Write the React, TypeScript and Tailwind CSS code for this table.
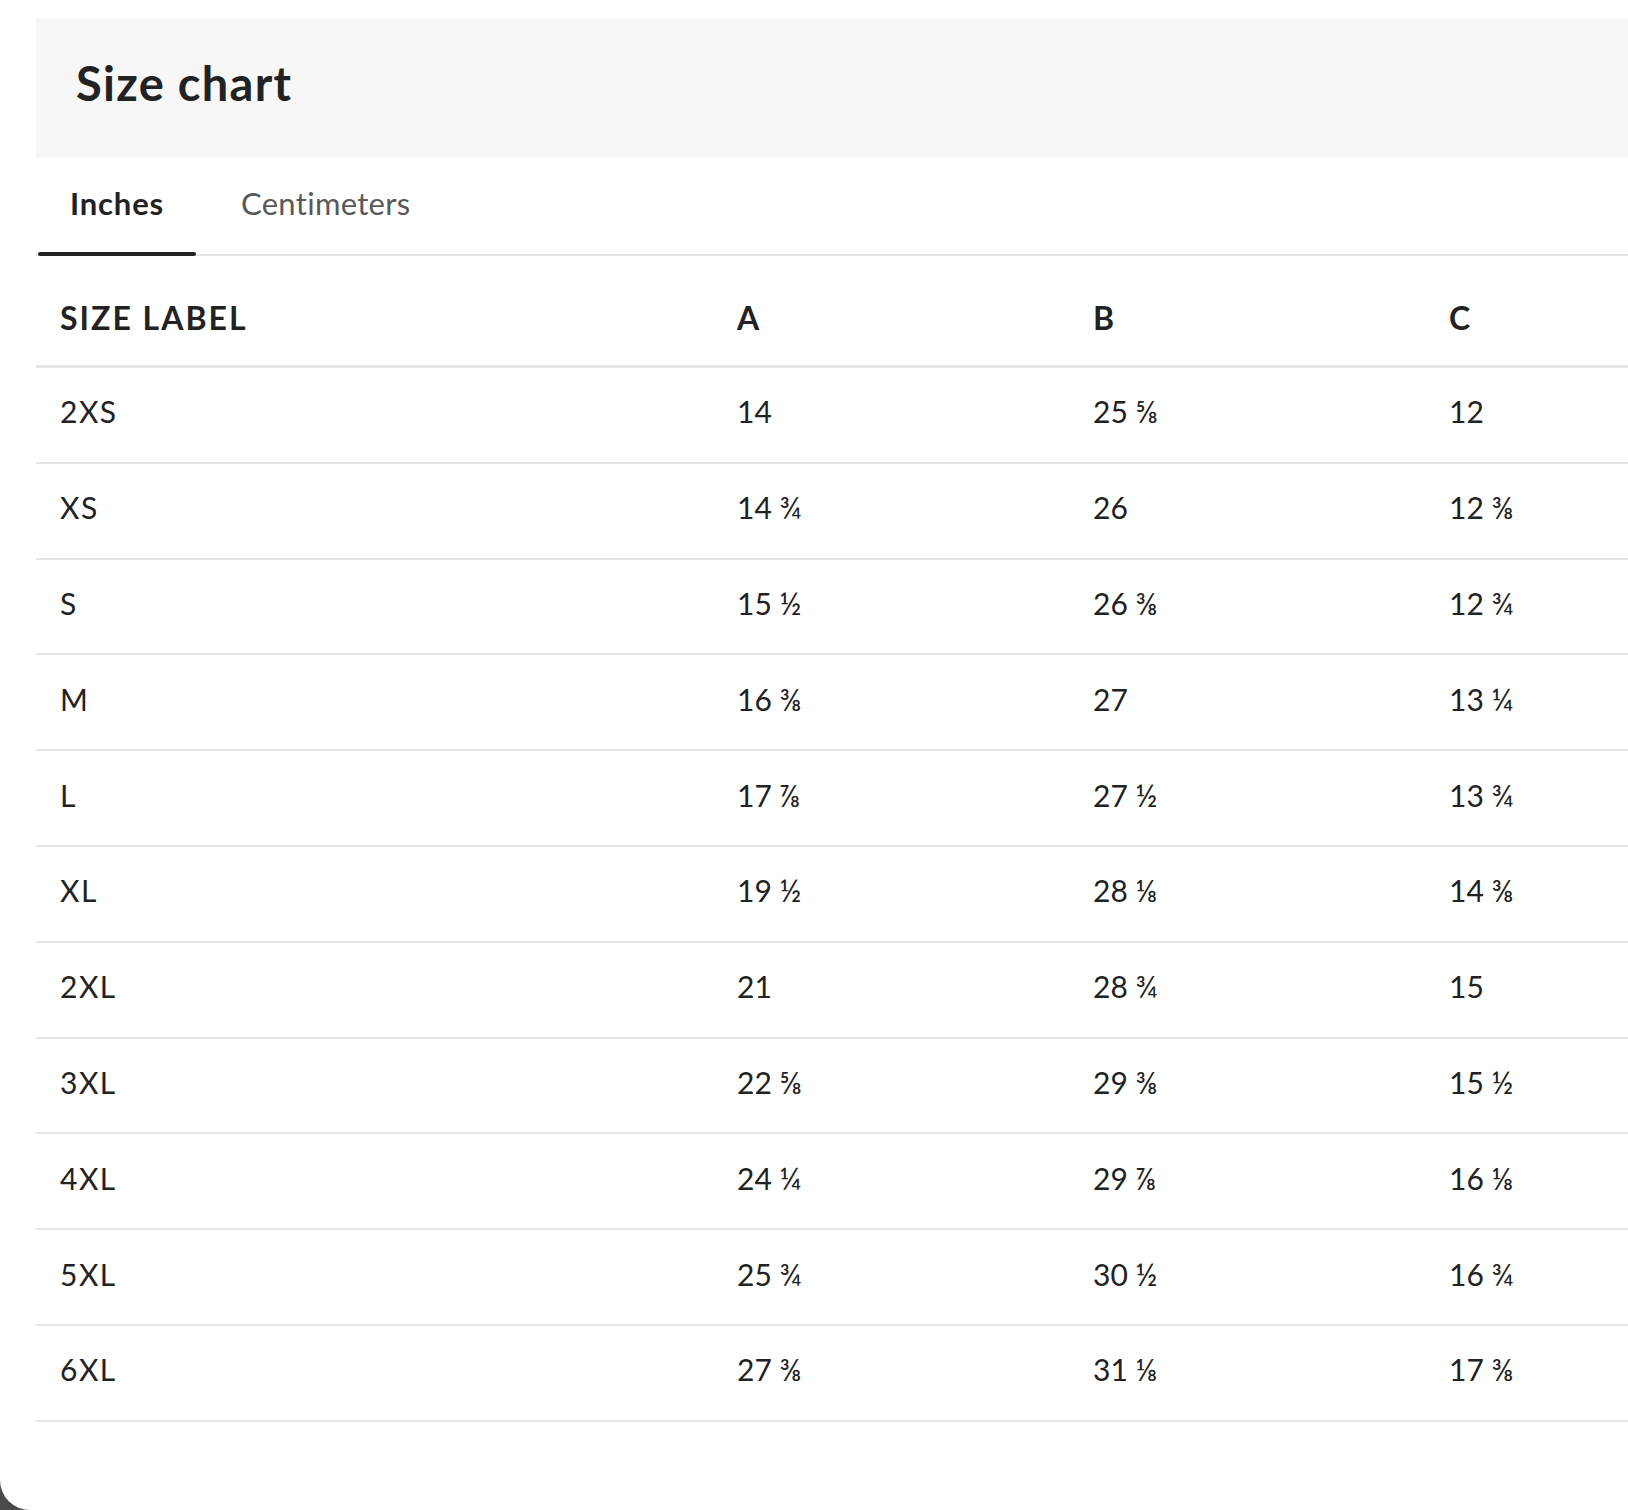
import React from "react"

const rows: [string, string, string, string][] = [
  ["2XS", "14", "25 ⅝", "12"],
  ["XS", "14 ¾", "26", "12 ⅜"],
  ["S", "15 ½", "26 ⅜", "12 ¾"],
  ["M", "16 ⅜", "27", "13 ¼"],
  ["L", "17 ⅞", "27 ½", "13 ¾"],
  ["XL", "19 ½", "28 ⅛", "14 ⅜"],
  ["2XL", "21", "28 ¾", "15"],
  ["3XL", "22 ⅝", "29 ⅜", "15 ½"],
  ["4XL", "24 ¼", "29 ⅞", "16 ⅛"],
  ["5XL", "25 ¾", "30 ½", "16 ¾"],
  ["6XL", "27 ⅜", "31 ⅛", "17 ⅜"],
]

const SizeChart = () => {
  return (
    <div className="h-[1510px] w-full overflow-hidden bg-[#4a4a4a] font-['Lato',sans-serif] text-[#222]">
      <div className="h-full w-full rounded-bl-[30px] bg-white pl-9 pt-[18px]">
        <div className="h-[140px] bg-[#f7f7f7] pl-10 pt-[42px]">
          <h2 className="text-[47px] font-bold leading-none tracking-[1.3px]">Size chart</h2>
        </div>

        <div className="flex h-[98px] border-b-2 border-[#e6e6e6]">
          <button className="-mb-[2px] ml-[2px] flex w-[158px] flex-col items-center">
            <span className="flex-1 pt-[30px] text-[31px] font-bold leading-none tracking-[0.8px]">
              Inches
            </span>
            <span className="h-1 w-full rounded-full bg-[#222]" />
          </button>
          <button className="flex pl-[45px] pt-[30px]">
            <span className="text-[31px] leading-none text-[#595959] tracking-[0.3px]">Centimeters</span>
          </button>
        </div>

        <div className="grid h-[112px] grid-cols-[677px_356px_356px_1fr] border-b-[3px] border-[#e6e6e6] pt-[46px] text-[32px] font-bold leading-none">
          <div className="pl-6 tracking-[2px]">SIZE LABEL</div>
          <div className="pl-6">A</div>
          <div className="pl-6">B</div>
          <div className="pl-6">C</div>
        </div>

        {rows.map((row, i) => (
          <div
            key={i}
            className="grid h-[95.8px] grid-cols-[677px_356px_356px_1fr] items-center border-b-2 border-[#e6e6e6] pb-[7px] text-[30px] leading-none"
          >
            {row.map((cell, j) => (
              <div key={j} className={j === 0 ? "pl-6 tracking-[1.5px]" : "pl-6"}>
                {cell}
              </div>
            ))}
          </div>
        ))}
      </div>
    </div>
  )
}

export default function App() {
  return <SizeChart />
}
